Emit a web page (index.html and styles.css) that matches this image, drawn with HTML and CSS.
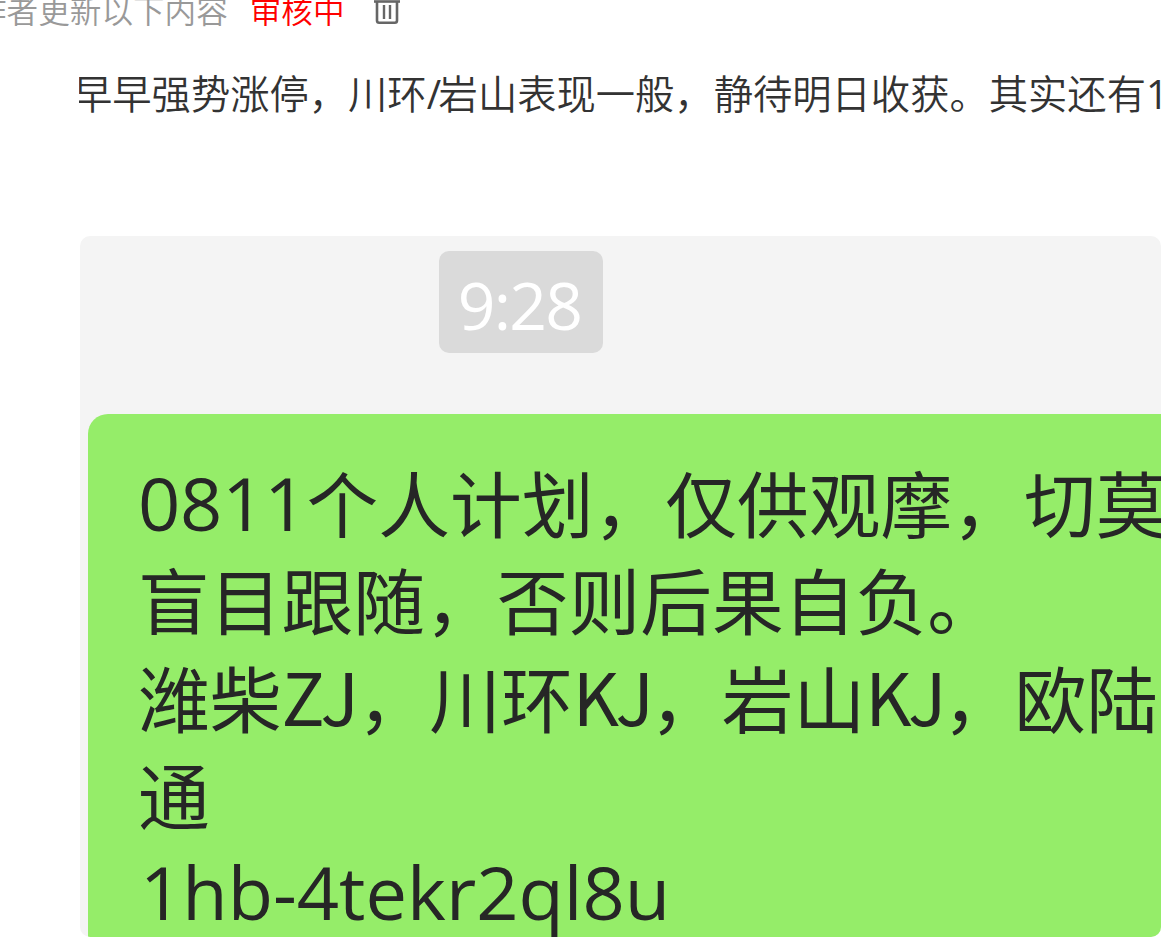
FILE: index.html
```
<!DOCTYPE html>
<html lang="zh-CN">
<head>
    <meta charset="UTF-8">
    <meta name="viewport" content="width=device-width, initial-scale=1.0">
    <title>作者更新</title>
    <link rel="stylesheet" href="styles.css">
</head>

<body>
    <div class="post-header">
        <span class="post-note">作者更新以下内容</span>
        <span class="post-status">审核中</span>
        <svg class="icon-delete" viewBox="0 0 28 32" fill="none" stroke="#666">
            <path d="M1 8.500H27" stroke-width="2.600"/>
            <path d="M4 9V27.500Q4 29.700 6.200 29.700H21.800Q24 29.700 24 27.500V9" stroke-width="2.600"/>
            <path d="M11 12V26M17 12V26" stroke-width="2.400"/>
            <path d="M9 7V4H19V7" stroke-width="2.600"/>
        </svg>
    </div>

    <div class="post-content">
        <p class="post-text">早早强势涨停，川环<span class="slash">/</span>岩山表现一般，静待明日收获。其实还有<span class="num">1</span></p>

        <div class="chat">
            <div class="chat-time">9:28</div>
            <div class="bubble">
                <div><span class="latin digits">0811</span>个人计划，仅供观摩，切莫</div>
                <div>盲目跟随，否则后果自负。</div>
                <div>潍柴<span class="caps zj">ZJ</span>，川环<span class="caps">KJ</span>，岩山<span class="caps">KJ</span>，欧陆</div>
                <div>通</div>
                <div><span class="latin code">1hb-4tekr2ql8u</span></div>
            </div>
        </div>
    </div>
</body>
</html>
```
FILE: styles.css
```
body {
    font-family: "Noto Sans CJK SC", sans-serif;
    font-weight: 350;
    margin: 0;
    padding: 0;
    height: 939px;
    background-color: #fff;
    overflow: hidden;
}

.post-header {
    display: flex;
    height: 40px;
    margin-top: -11px;
    margin-left: -25px;
    font-size: 31.6px;
    line-height: 40px;
    white-space: nowrap;
}

.post-note {
    color: #999;
}

.post-status {
    margin-left: 22px;
    color: #f00;
}

.icon-delete {
    width: 28px;
    height: 32px;
    margin-top: 4px;
    margin-left: 28px;
}

.post-content {
    width: 1082px;
    margin-left: 79px;
    overflow: hidden;
}

.post-text {
    height: 60px;
    margin: 33px 0 114px -6px;
    font-size: 39.3px;
    line-height: 60px;
    color: #333;
    white-space: nowrap;
}

.slash,
.num,
.latin,
.caps {
    line-height: 0;
}

.slash,
.num,
.latin {
    font-family: "Open Sans", sans-serif;
    font-weight: 400;
}

.slash {
    letter-spacing: -2.5px;
}

.chat {
    display: flex;
    flex-direction: column;
    height: 701px;
    margin-left: 1px;
    padding: 15px 0 0 8px;
    border-radius: 10px;
    background-color: #f4f4f4;
    box-sizing: border-box;
    overflow: hidden;
}

.chat-time {
    width: 164px;
    height: 102px;
    margin-left: 351px;
    padding-right: 3px;
    border-radius: 10px;
    background-color: #dadada;
    color: #fff;
    font-family: "Open Sans", sans-serif;
    font-weight: 400;
    font-size: 66px;
    line-height: 106px;
    letter-spacing: -1.8px;
    text-align: center;
    box-sizing: border-box;
}

.bubble {
    flex: none;
    height: 560px;
    margin-top: 61px;
    padding: 39px 0 0 50px;
    border-radius: 20px 0 0 0;
    background-color: #95ed69;
    color: #262626;
    font-size: 71.75px;
    font-weight: 400;
    line-height: 97.25px;
    white-space: nowrap;
    box-sizing: border-box;
}

.latin {
    font-size: 74px;
    vertical-align: 1.5px;
}

.digits {
    letter-spacing: -0.2px;
}

.caps {
    letter-spacing: -3.7px;
    vertical-align: 1.5px;
}

.zj {
    letter-spacing: -1.5px;
}

.code {
    margin-left: 2px;
}
```
